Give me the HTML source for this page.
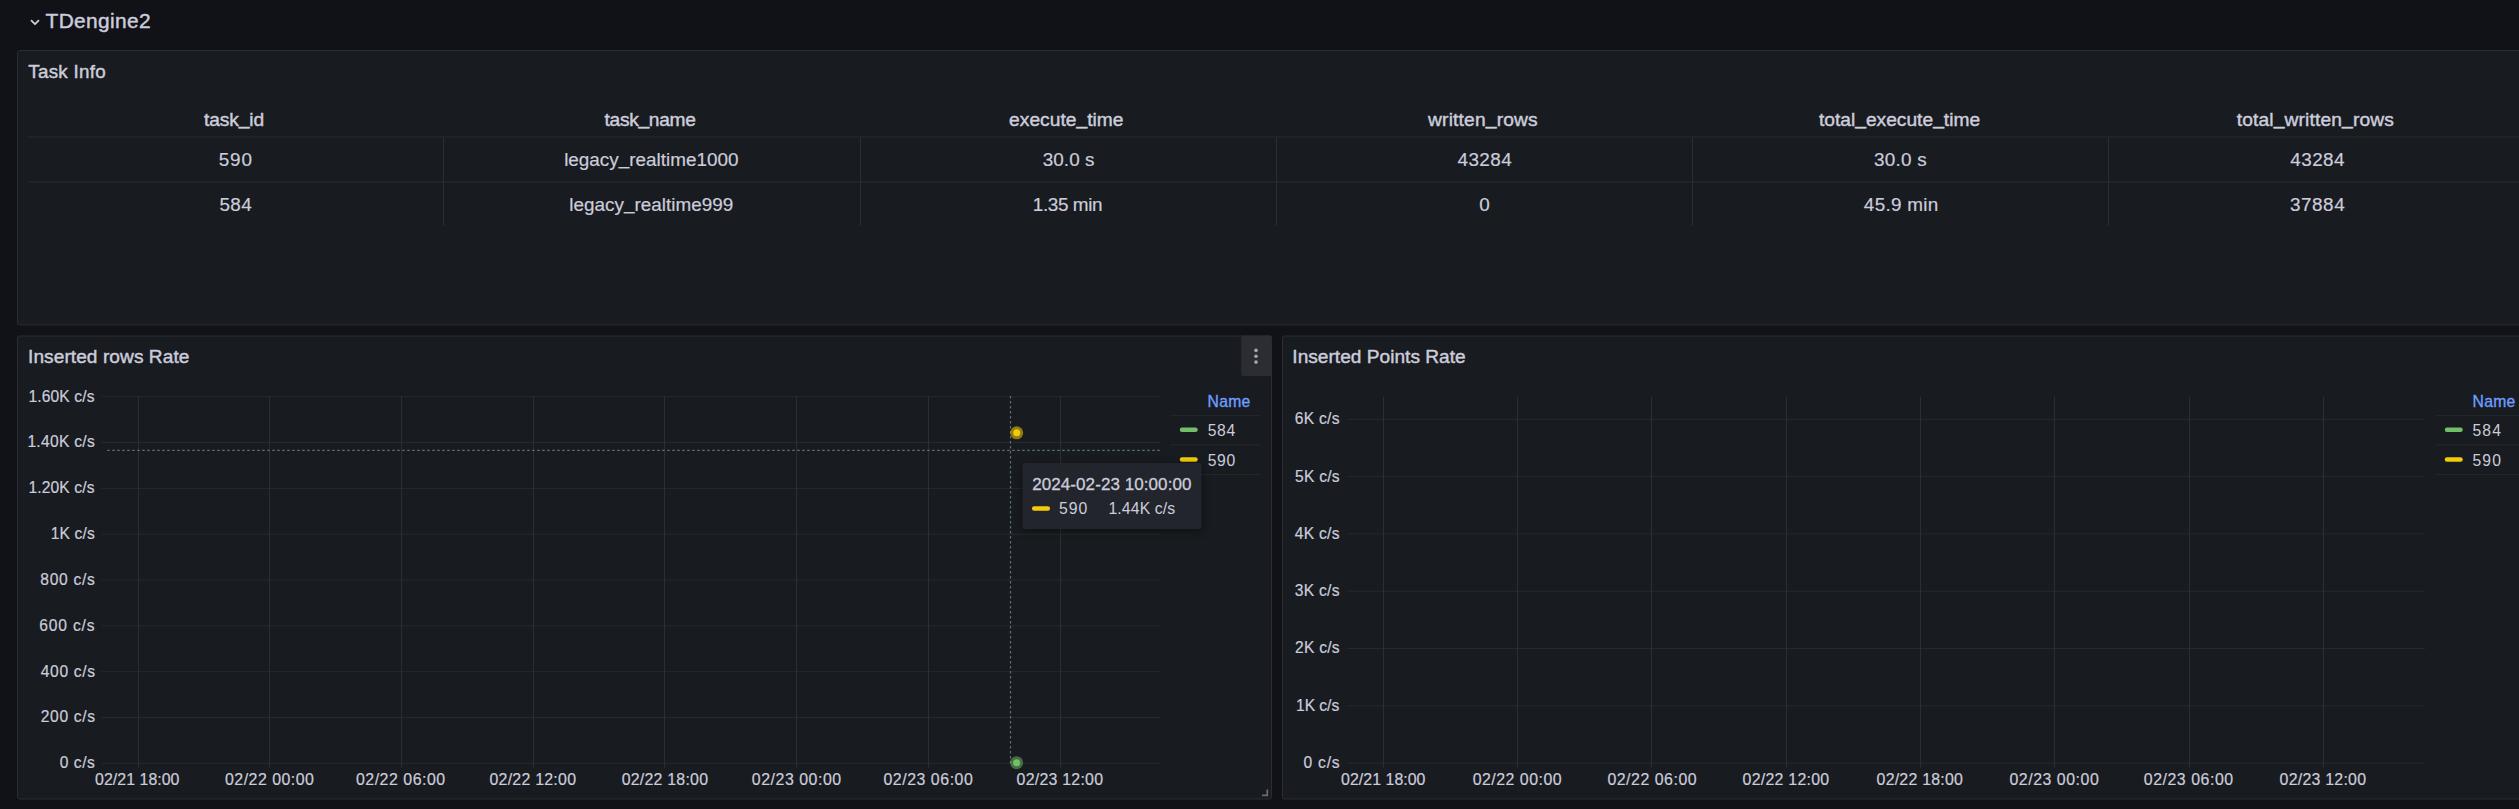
<!DOCTYPE html><html><head><meta charset="utf-8"><style>
html,body{margin:0;padding:0;background:#111217;width:2519px;height:809px;overflow:hidden}
svg{display:block}
text{font-family:"Liberation Sans", sans-serif;fill:#ccccdc}
.m{stroke:#ccccdc;stroke-width:0.45px} .r{stroke:#ccccdc;stroke-width:0.2px} .m2{stroke:#ccccdc;stroke-width:0.3px}
</style></head><body>
<svg width="2519" height="809" viewBox="0 0 2519 809">
<rect width="2519" height="809" fill="#111217"/>
<path d="M31.5 20.6 L35 24.2 L38.5 20.6" fill="none" stroke="#ccccdc" stroke-width="1.8" stroke-linecap="round" stroke-linejoin="round"/>
<text x="45.50" y="28" class="m" style="font-size:20.9px;letter-spacing:0.375px">TDengine2</text>
<rect x="17.5" y="50.5" width="2540" height="274.4" rx="2" fill="#181b1f" stroke="#2b2d33" stroke-width="1"/>
<text x="28.35" y="78" class="m" style="font-size:18.8px;letter-spacing:0.263px">Task Info</text>
<line x1="28" y1="137" x2="2519" y2="137" stroke="#2a2c31" stroke-width="1.2"/>
<line x1="28" y1="182" x2="2519" y2="182" stroke="#2a2c31" stroke-width="1.2"/>
<line x1="443.5" y1="138" x2="443.5" y2="226" stroke="#2b2f33" stroke-width="1"/>
<line x1="860.5" y1="138" x2="860.5" y2="226" stroke="#2b2f33" stroke-width="1"/>
<line x1="1276.5" y1="138" x2="1276.5" y2="226" stroke="#2b2f33" stroke-width="1"/>
<line x1="1692.5" y1="138" x2="1692.5" y2="226" stroke="#2b2f33" stroke-width="1"/>
<line x1="2108.5" y1="138" x2="2108.5" y2="226" stroke="#2b2f33" stroke-width="1"/>
<text x="234.03" y="126" text-anchor="middle" class="m" style="font-size:19.2px;letter-spacing:-0.133px">task<tspan dy="-2">_</tspan><tspan dy="2">id</tspan></text>
<text x="650.04" y="126" text-anchor="middle" class="m" style="font-size:19.2px;letter-spacing:-0.325px">task<tspan dy="-2">_</tspan><tspan dy="2">name</tspan></text>
<text x="1066.31" y="126" text-anchor="middle" class="m" style="font-size:19.2px;letter-spacing:0.018px">execute<tspan dy="-2">_</tspan><tspan dy="2">time</tspan></text>
<text x="1482.99" y="126" text-anchor="middle" class="m" style="font-size:19.2px;letter-spacing:0.173px">written<tspan dy="-2">_</tspan><tspan dy="2">rows</tspan></text>
<text x="1899.50" y="126" text-anchor="middle" class="m" style="font-size:19.2px;letter-spacing:0.006px">total<tspan dy="-2">_</tspan><tspan dy="2">execute</tspan><tspan dy="-2">_</tspan><tspan dy="2">time</tspan></text>
<text x="2315.37" y="126" text-anchor="middle" class="m" style="font-size:19.2px;letter-spacing:0.141px">total<tspan dy="-2">_</tspan><tspan dy="2">written</tspan><tspan dy="-2">_</tspan><tspan dy="2">rows</tspan></text>
<text x="235.75" y="166.0" text-anchor="middle" class="r" style="font-size:18.9px;letter-spacing:0.900px">590</text>
<text x="651.30" y="166.0" text-anchor="middle" class="r" style="font-size:18.9px;letter-spacing:-0.006px">legacy<tspan dy="-2">_</tspan><tspan dy="2">realtime1000</tspan></text>
<text x="1068.64" y="166.0" text-anchor="middle" class="r" style="font-size:18.9px;letter-spacing:0.080px">30.0 s</text>
<text x="1484.81" y="166.0" text-anchor="middle" class="r" style="font-size:18.9px;letter-spacing:0.425px">43284</text>
<text x="1900.53" y="166.0" text-anchor="middle" class="r" style="font-size:18.9px;letter-spacing:0.260px">30.0 s</text>
<text x="2317.60" y="166.0" text-anchor="middle" class="r" style="font-size:18.9px;letter-spacing:0.400px">43284</text>
<text x="235.77" y="210.5" text-anchor="middle" class="r" style="font-size:18.9px;letter-spacing:0.350px">584</text>
<text x="651.31" y="210.5" text-anchor="middle" class="r" style="font-size:18.9px;letter-spacing:0.012px">legacy<tspan dy="-2">_</tspan><tspan dy="2">realtime999</tspan></text>
<text x="1067.50" y="210.5" text-anchor="middle" class="r" style="font-size:18.9px;letter-spacing:-0.400px">1.35 min</text>
<text x="1488.10" y="210.5" text-anchor="middle" class="r" style="font-size:18.9px;letter-spacing:7.000px">0</text>
<text x="1901.24" y="210.5" text-anchor="middle" class="r" style="font-size:18.9px;letter-spacing:0.286px">45.9 min</text>
<text x="2317.59" y="210.5" text-anchor="middle" class="r" style="font-size:18.9px;letter-spacing:0.575px">37884</text>
<rect x="17.5" y="336" width="1254" height="463" rx="2" fill="#181b1f" stroke="#2b2d33" stroke-width="1"/>
<text x="28.05" y="362.5" class="m" style="font-size:19.1px;letter-spacing:0.065px">Inserted rows Rate</text>
<rect x="1241.2" y="335.6" width="30.7" height="40.4" rx="2" fill="#2b2d32"/>
<circle cx="1256" cy="350.4" r="1.8" fill="#a6a6b4"/>
<circle cx="1256" cy="356.3" r="1.8" fill="#a6a6b4"/>
<circle cx="1256" cy="362.1" r="1.8" fill="#a6a6b4"/>
<line x1="101.5" y1="396.7" x2="1160" y2="396.7" stroke="#26292d" stroke-width="1"/>
<text x="94.62" y="401.6" text-anchor="end" class="r" style="font-size:15.6px;letter-spacing:0.125px">1.60K c/s</text>
<line x1="101.5" y1="442.5" x2="1160" y2="442.5" stroke="#26292d" stroke-width="1"/>
<text x="95.10" y="447.4" text-anchor="end" class="r" style="font-size:15.6px;letter-spacing:0.300px">1.40K c/s</text>
<line x1="101.5" y1="488.4" x2="1160" y2="488.4" stroke="#26292d" stroke-width="1"/>
<text x="94.62" y="493.3" text-anchor="end" class="r" style="font-size:15.6px;letter-spacing:0.125px">1.20K c/s</text>
<line x1="101.5" y1="534.2" x2="1160" y2="534.2" stroke="#26292d" stroke-width="1"/>
<text x="94.82" y="539.1" text-anchor="end" class="r" style="font-size:15.6px;letter-spacing:0.120px">1K c/s</text>
<line x1="101.5" y1="580.0" x2="1160" y2="580.0" stroke="#26292d" stroke-width="1"/>
<text x="95.57" y="584.9" text-anchor="end" class="r" style="font-size:15.6px;letter-spacing:0.717px">800 c/s</text>
<line x1="101.5" y1="625.8" x2="1160" y2="625.8" stroke="#26292d" stroke-width="1"/>
<text x="95.37" y="630.7" text-anchor="end" class="r" style="font-size:15.6px;letter-spacing:0.817px">600 c/s</text>
<line x1="101.5" y1="671.7" x2="1160" y2="671.7" stroke="#26292d" stroke-width="1"/>
<text x="95.67" y="676.6" text-anchor="end" class="r" style="font-size:15.6px;letter-spacing:0.667px">400 c/s</text>
<line x1="101.5" y1="717.5" x2="1160" y2="717.5" stroke="#26292d" stroke-width="1"/>
<text x="95.67" y="722.4" text-anchor="end" class="r" style="font-size:15.6px;letter-spacing:0.667px">200 c/s</text>
<line x1="101.5" y1="763.3" x2="1160" y2="763.3" stroke="#26292d" stroke-width="1"/>
<text x="95.45" y="768.2" text-anchor="end" class="r" style="font-size:15.6px;letter-spacing:0.550px">0 c/s</text>
<line x1="138.5" y1="396.5" x2="138.5" y2="767.5" stroke="#2b2f33" stroke-width="1"/>
<text x="137.32" y="785.3" text-anchor="middle" class="r" style="font-size:15.9px;letter-spacing:0.040px">02/21 18:00</text>
<line x1="269.5" y1="396.5" x2="269.5" y2="767.5" stroke="#2b2f33" stroke-width="1"/>
<text x="269.69" y="785.3" text-anchor="middle" class="r" style="font-size:15.9px;letter-spacing:0.500px">02/22 00:00</text>
<line x1="401.5" y1="396.5" x2="401.5" y2="767.5" stroke="#2b2f33" stroke-width="1"/>
<text x="400.84" y="785.3" text-anchor="middle" class="r" style="font-size:15.9px;letter-spacing:0.530px">02/22 06:00</text>
<line x1="533.5" y1="396.5" x2="533.5" y2="767.5" stroke="#2b2f33" stroke-width="1"/>
<text x="532.85" y="785.3" text-anchor="middle" class="r" style="font-size:15.9px;letter-spacing:0.260px">02/22 12:00</text>
<line x1="664.5" y1="396.5" x2="664.5" y2="767.5" stroke="#2b2f33" stroke-width="1"/>
<text x="664.98" y="785.3" text-anchor="middle" class="r" style="font-size:15.9px;letter-spacing:0.240px">02/22 18:00</text>
<line x1="796.5" y1="396.5" x2="796.5" y2="767.5" stroke="#2b2f33" stroke-width="1"/>
<text x="796.77" y="785.3" text-anchor="middle" class="r" style="font-size:15.9px;letter-spacing:0.540px">02/23 00:00</text>
<line x1="928.5" y1="396.5" x2="928.5" y2="767.5" stroke="#2b2f33" stroke-width="1"/>
<text x="928.41" y="785.3" text-anchor="middle" class="r" style="font-size:15.9px;letter-spacing:0.540px">02/23 06:00</text>
<line x1="1060.5" y1="396.5" x2="1060.5" y2="767.5" stroke="#2b2f33" stroke-width="1"/>
<text x="1059.90" y="785.3" text-anchor="middle" class="r" style="font-size:15.9px;letter-spacing:0.250px">02/23 12:00</text>
<text x="1207.50" y="407.2" style="font-size:15.7px;letter-spacing:0.333px;fill:#6e9fff;stroke:#6e9fff;stroke-width:0.35px">Name</text>
<line x1="1170" y1="415.7" x2="1261" y2="415.7" stroke="#26292d" stroke-width="1"/>
<line x1="1170" y1="445" x2="1261" y2="445" stroke="#26292d" stroke-width="1"/>
<line x1="1170" y1="474.7" x2="1261" y2="474.7" stroke="#26292d" stroke-width="1"/>
<line x1="1182" y1="429.8" x2="1195.5" y2="429.8" stroke="#73bf69" stroke-width="4.5" stroke-linecap="round"/>
<text x="1207.70" y="436.2" style="font-size:15.7px;letter-spacing:0.700px">584</text>
<line x1="1182" y1="459.6" x2="1195.5" y2="459.6" stroke="#f2cc0c" stroke-width="4.5" stroke-linecap="round"/>
<text x="1207.70" y="466" style="font-size:15.7px;letter-spacing:0.700px">590</text>
<line x1="1010.5" y1="396" x2="1010.5" y2="763" stroke="#5b6f7c" stroke-width="1.2" stroke-dasharray="2.5 2.5"/>
<line x1="105.8" y1="450.3" x2="1160" y2="450.3" stroke="#5b6f7c" stroke-width="1.3" stroke-dasharray="2.5 2.5" stroke-dashoffset="3.6"/>
<circle cx="1016.7" cy="432.8" r="6.5" fill="#f2cc0c" fill-opacity="0.55"/><circle cx="1016.7" cy="432.8" r="3.5" fill="#f2cc0c"/>
<circle cx="1016.6" cy="762.7" r="6.5" fill="#73bf69" fill-opacity="0.5"/><circle cx="1016.6" cy="762.7" r="3.5" fill="#73bf69"/>
<rect x="1022.5" y="463" width="179" height="66" rx="2" fill="#22252b" style="filter:drop-shadow(0 2px 4px rgba(0,0,0,0.4))"/>
<text x="1032.25" y="490" class="m2" style="font-size:17px;letter-spacing:0.072px">2024-02-23 10:00:00</text>
<line x1="1034.2" y1="508.4" x2="1047.8" y2="508.4" stroke="#f2cc0c" stroke-width="4.5" stroke-linecap="round"/>
<text x="1059.00" y="514" style="font-size:15.8px;letter-spacing:1.000px">590</text>
<text x="1108.45" y="514" style="font-size:15.8px;letter-spacing:0.113px">1.44K c/s</text>
<path d="M1262 795.3 H1267.3 V789.5" fill="none" stroke="#6a6b70" stroke-width="1.8"/>
<rect x="1282.5" y="336" width="1300" height="463" rx="2" fill="#181b1f" stroke="#2b2d33" stroke-width="1"/>
<text x="1292.35" y="363" class="m" style="font-size:19.1px;letter-spacing:0.016px">Inserted Points Rate</text>
<line x1="1347" y1="419.3" x2="2425" y2="419.3" stroke="#26292d" stroke-width="1"/>
<text x="1339.78" y="424.2" text-anchor="end" class="r" style="font-size:15.6px;letter-spacing:0.280px">6K c/s</text>
<line x1="1347" y1="476.6" x2="2425" y2="476.6" stroke="#26292d" stroke-width="1"/>
<text x="1339.84" y="481.5" text-anchor="end" class="r" style="font-size:15.6px;letter-spacing:0.240px">5K c/s</text>
<line x1="1347" y1="533.9" x2="2425" y2="533.9" stroke="#26292d" stroke-width="1"/>
<text x="1339.78" y="538.8" text-anchor="end" class="r" style="font-size:15.6px;letter-spacing:0.280px">4K c/s</text>
<line x1="1347" y1="591.2" x2="2425" y2="591.2" stroke="#26292d" stroke-width="1"/>
<text x="1339.78" y="596.1" text-anchor="end" class="r" style="font-size:15.6px;letter-spacing:0.280px">3K c/s</text>
<line x1="1347" y1="648.5" x2="2425" y2="648.5" stroke="#26292d" stroke-width="1"/>
<text x="1339.84" y="653.4" text-anchor="end" class="r" style="font-size:15.6px;letter-spacing:0.240px">2K c/s</text>
<line x1="1347" y1="705.8" x2="2425" y2="705.8" stroke="#26292d" stroke-width="1"/>
<text x="1339.23" y="710.7" text-anchor="end" class="r" style="font-size:15.6px;letter-spacing:-0.020px">1K c/s</text>
<line x1="1347" y1="763.1" x2="2425" y2="763.1" stroke="#26292d" stroke-width="1"/>
<text x="1340.40" y="768.0" text-anchor="end" class="r" style="font-size:15.6px;letter-spacing:0.800px">0 c/s</text>
<line x1="1383.5" y1="396.8" x2="1383.5" y2="767.5" stroke="#2b2f33" stroke-width="1"/>
<text x="1383.32" y="785.3" text-anchor="middle" class="r" style="font-size:15.9px;letter-spacing:0.040px">02/21 18:00</text>
<line x1="1517.5" y1="396.8" x2="1517.5" y2="767.5" stroke="#2b2f33" stroke-width="1"/>
<text x="1517.41" y="785.3" text-anchor="middle" class="r" style="font-size:15.9px;letter-spacing:0.500px">02/22 00:00</text>
<line x1="1651.5" y1="396.8" x2="1651.5" y2="767.5" stroke="#2b2f33" stroke-width="1"/>
<text x="1652.28" y="785.3" text-anchor="middle" class="r" style="font-size:15.9px;letter-spacing:0.530px">02/22 06:00</text>
<line x1="1786.5" y1="396.8" x2="1786.5" y2="767.5" stroke="#2b2f33" stroke-width="1"/>
<text x="1786.01" y="785.3" text-anchor="middle" class="r" style="font-size:15.9px;letter-spacing:0.260px">02/22 12:00</text>
<line x1="1920.5" y1="396.8" x2="1920.5" y2="767.5" stroke="#2b2f33" stroke-width="1"/>
<text x="1919.86" y="785.3" text-anchor="middle" class="r" style="font-size:15.9px;letter-spacing:0.240px">02/22 18:00</text>
<line x1="2054.5" y1="396.8" x2="2054.5" y2="767.5" stroke="#2b2f33" stroke-width="1"/>
<text x="2054.37" y="785.3" text-anchor="middle" class="r" style="font-size:15.9px;letter-spacing:0.540px">02/23 00:00</text>
<line x1="2189.5" y1="396.8" x2="2189.5" y2="767.5" stroke="#2b2f33" stroke-width="1"/>
<text x="2188.73" y="785.3" text-anchor="middle" class="r" style="font-size:15.9px;letter-spacing:0.540px">02/23 06:00</text>
<line x1="2323.5" y1="396.8" x2="2323.5" y2="767.5" stroke="#2b2f33" stroke-width="1"/>
<text x="2322.94" y="785.3" text-anchor="middle" class="r" style="font-size:15.9px;letter-spacing:0.250px">02/23 12:00</text>
<text x="2472.50" y="407.2" style="font-size:15.7px;letter-spacing:0.333px;fill:#6e9fff;stroke:#6e9fff;stroke-width:0.35px">Name</text>
<line x1="2435" y1="415.7" x2="2519" y2="415.7" stroke="#26292d" stroke-width="1"/>
<line x1="2435" y1="445" x2="2519" y2="445" stroke="#26292d" stroke-width="1"/>
<line x1="2435" y1="474.7" x2="2519" y2="474.7" stroke="#26292d" stroke-width="1"/>
<line x1="2447" y1="429.8" x2="2460.5" y2="429.8" stroke="#73bf69" stroke-width="4.5" stroke-linecap="round"/>
<text x="2472.40" y="436.2" style="font-size:15.7px;letter-spacing:1.200px">584</text>
<line x1="2447" y1="459.6" x2="2460.5" y2="459.6" stroke="#f2cc0c" stroke-width="4.5" stroke-linecap="round"/>
<text x="2472.40" y="466" style="font-size:15.7px;letter-spacing:1.200px">590</text>
</svg></body></html>
